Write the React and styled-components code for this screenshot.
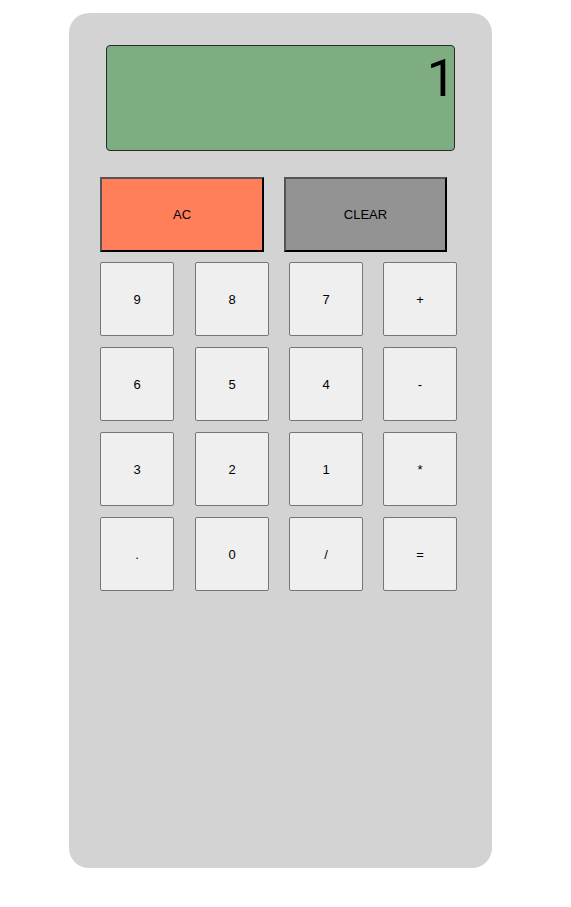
import React from "react";
import styled, { createGlobalStyle } from "styled-components";

const Global = createGlobalStyle`
  html, body { margin: 0; padding: 0; background: #fff; }
  body { font-family: "Liberation Sans", Arial, sans-serif; }
`;

const Card = styled.div`
  width: 423px;
  height: 855px;
  margin: 13px 0 0 69px;
  background: #d3d3d3;
  border-radius: 20px;
  box-sizing: border-box;
  padding: 32px 0 0 31px;
  display: flex;
  flex-direction: column;
`;

const Display = styled.div`
  width: 349px;
  height: 106px;
  margin-left: 6px;
  box-sizing: border-box;
  background: #7ead82;
  border: 1px solid #2a2a2a;
  border-radius: 4px;
  text-align: right;
  font-family: Roboto, "Liberation Sans", Arial, sans-serif;
  font-size: 52px;
  line-height: 60px;
  padding: 3px 0 0 0;
  color: #000;
  overflow: hidden;
`;

const Value = styled.span`
  display: inline-block;
  margin-right: -2px;
`;

const TopRow = styled.div`
  display: flex;
  gap: 20px;
  margin-top: 26px;
`;

const BigButton = styled.button`
  width: ${(p) => p.$w}px;
  height: 75px;
  box-sizing: border-box;
  background: ${(p) => p.$bg};
  border: 2px solid;
  border-color: #555 #000 #000 #555;
  border-radius: 0;
  font-family: "Liberation Sans", Arial, sans-serif;
  font-size: 13px;
  color: #000;
  padding: 0;
`;

const Grid = styled.div`
  display: grid;
  grid-template-columns: 95px 94px 94px 74px;
  row-gap: 11px;
  margin-top: 10px;
`;

const Key = styled.button`
  width: 74px;
  height: 74px;
  box-sizing: border-box;
  background: #efefef;
  border: 1px solid #767676;
  border-radius: 2px;
  font-family: "Liberation Sans", Arial, sans-serif;
  font-size: 13px;
  color: #000;
  padding: 0;
`;

const keys = ["9", "8", "7", "+", "6", "5", "4", "-", "3", "2", "1", "*", ".", "0", "/", "="];

export default function App() {
  return (
    <>
      <Global />
      <Card>
        <Display>
          <Value>1</Value>
        </Display>
        <TopRow>
          <BigButton $w={164} $bg="#ff7f5a">AC</BigButton>
          <BigButton $w={163} $bg="#939394">CLEAR</BigButton>
        </TopRow>
        <Grid>
          {keys.map((k) => (
            <Key key={k}>{k}</Key>
          ))}
        </Grid>
      </Card>
    </>
  );
}
